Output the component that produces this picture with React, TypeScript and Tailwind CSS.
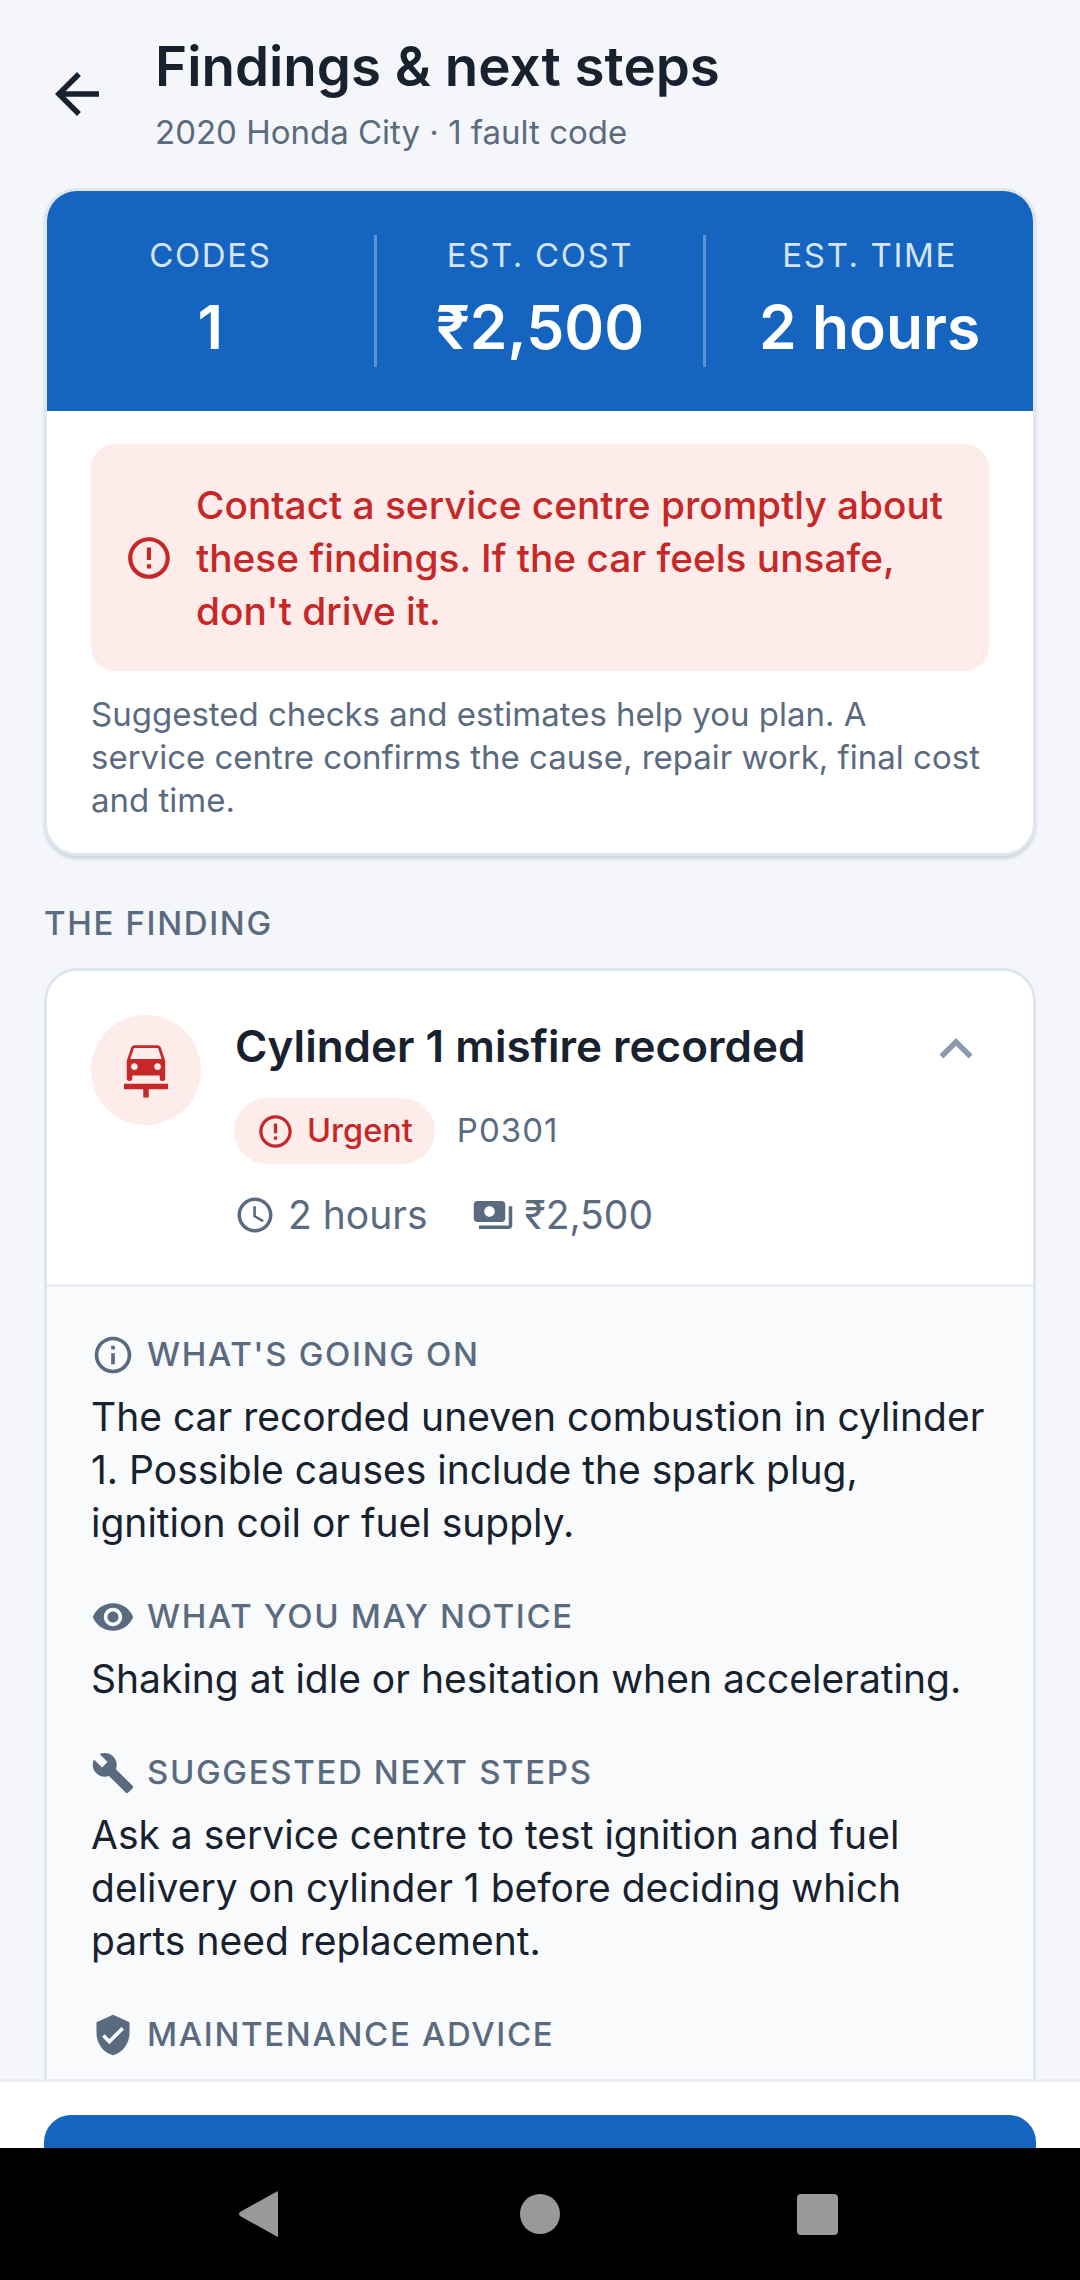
import { MdArrowBack, MdErrorOutline, MdCarRepair, MdKeyboardArrowUp, MdAccessTime, MdPayments, MdInfoOutline, MdVisibility, MdBuild, MdVerifiedUser } from 'react-icons/md'
import type { ReactNode } from 'react'

const stats = [
  { label: 'CODES', value: '1' },
  { label: 'EST. COST', value: '₹2,500' },
  { label: 'EST. TIME', value: '2 hours' },
]

function Section({ icon, title, children }: { icon: ReactNode; title: string; children?: ReactNode }) {
  return (
    <div className="mb-[48px]">
      <div className="flex items-center gap-[12px] h-[40px] text-[#5b6b7f]">
        {icon}
        <span className="text-[33px] font-medium tracking-[1.65px]">{title}</span>
      </div>
      {children && <p className="mt-[15px] text-[39px] leading-[53px] text-[#18212e]">{children}</p>}
    </div>
  )
}

export default function App() {
  return (
    <div className="w-[1080px] h-[2280px] flex flex-col overflow-hidden bg-[#f4f6fa] font-['Inter',sans-serif]">
      <div className="flex-1 min-h-0 overflow-hidden">
        {/* Header */}
        <div className="flex items-center h-[188px] pl-[44px]">
          <MdArrowBack className="text-[#18212e] text-[66px] mr-[45px]" />
          <div>
            <h1 className="text-[54.7px] leading-[66px] font-semibold text-[#18212e]">Findings &amp; next steps</h1>
            <p className="text-[33px] leading-[46px] mt-[10px] text-[#5b6b7f]">2020 Honda City · 1 fault code</p>
          </div>
        </div>

        {/* Summary card */}
        <div className="mx-[44px] rounded-[33px] border-[3px] border-[#e0e6ee] bg-white overflow-hidden shadow-[0_3px_3px_rgba(100,116,139,0.25)]">
          <div className="flex items-center h-[220px] bg-[#1565c0]">
            {stats.map((s, i) => (
              <div key={s.label} className={`flex-1 h-[132px] flex flex-col items-center ${i > 0 ? 'border-l-[3px] border-white/30' : ''}`}>
                <span className="text-[33px] leading-[38px] mt-[1px] tracking-[1.65px] text-[#d6e4f7]">{s.label}</span>
                <span className="text-[60.5px] leading-[76px] mt-[15px] font-semibold text-white">{s.value}</span>
              </div>
            ))}
          </div>
          <div className="px-[44px] pt-[33px] pb-[31px]">
            <div className="flex items-center gap-[22px] rounded-[24px] bg-[#fdecea] px-[33px] py-[34px]">
              <MdErrorOutline className="shrink-0 text-[50px] text-[#c62828]" />
              <p className="text-[38.8px] leading-[53px] font-medium text-[#c62828]">
                Contact a service centre promptly about these findings. If the car feels unsafe, don't drive it.
              </p>
            </div>
            <p className="mt-[22px] text-[33px] leading-[43px] text-[#5b6b7f]">
              Suggested checks and estimates help you plan. A service centre confirms the cause, repair work, final cost and time.
            </p>
          </div>
        </div>

        <div className="mx-[44px] mt-[47px] mb-[25px] text-[33px] leading-[40px] font-medium tracking-[1.65px] text-[#5b6b7f]">THE FINDING</div>

        {/* Finding card */}
        <div className="mx-[44px] rounded-[33px] border-[3px] border-[#e0e6ee] bg-white overflow-hidden">
          <div className="flex px-[44px] pt-[44px] pb-[44px] border-b-[3px] border-[#e8ecf2]">
            <div className="w-[110px] h-[110px] rounded-full bg-[#fdecea] flex items-center justify-center shrink-0">
              <MdCarRepair className="text-[66px] text-[#c62828]" />
            </div>
            <div className="ml-[33px] flex-1">
              <div className="flex items-center justify-between h-[60px] mt-[1px]">
                <h2 className="ml-[1px] text-[44px] leading-[60px] font-semibold text-[#18212e]">Cylinder 1 misfire recorded</h2>
                <MdKeyboardArrowUp className="shrink-0 text-[66px] text-[#8a9bb0] mt-[6px]" />
              </div>
              <div className="flex items-center gap-[22px] mt-[22px]">
                <span className="flex items-center gap-[12px] h-[66px] px-[22px] rounded-full bg-[#fdecea] text-[#c62828] text-[32.5px] font-medium">
                  <MdErrorOutline className="text-[39px]" />
                  Urgent
                </span>
                <span className="text-[33px] tracking-[1px] text-[#5b6b7f]">P0301</span>
              </div>
              <div className="flex items-center mt-[26px] text-[39px] leading-[50px] text-[#5b6b7f]">
                <MdAccessTime className="text-[42px] mr-[12px]" />
                <span>2 hours</span>
                <MdPayments className="text-[42px] ml-[44px] mr-[11px]" />
                <span>₹2,500</span>
              </div>
            </div>
          </div>
          <div className="bg-[#f8fafc] px-[44px] pt-[48px] pb-[200px]">
            <Section icon={<MdInfoOutline className="text-[44px]" />} title="WHAT'S GOING ON">
              The car recorded uneven combustion in cylinder 1. Possible causes include the spark plug, ignition coil or fuel supply.
            </Section>
            <Section icon={<MdVisibility className="text-[44px]" />} title="WHAT YOU MAY NOTICE">
              Shaking at idle or hesitation when accelerating.
            </Section>
            <Section icon={<MdBuild className="text-[44px]" />} title="SUGGESTED NEXT STEPS">
              Ask a service centre to test ignition and fuel delivery on cylinder 1 before deciding which parts need replacement.
            </Section>
            <Section icon={<MdVerifiedUser className="text-[44px]" />} title="MAINTENANCE ADVICE" />
          </div>
        </div>
      </div>

      {/* Footer, cut by the nav bar */}
      <div className="h-[69px] shrink-0 bg-white border-t-[3px] border-[#e8ecf2] px-[44px] pt-[33px] overflow-hidden">
        <div className="h-[100px] rounded-[27px] bg-[#1565c0]" />
      </div>

      {/* Android nav bar */}
      <div className="h-[132px] shrink-0 bg-black flex items-center">
        <svg className="w-full h-[60px]" viewBox="0 0 1080 60" fill="#999">
          <path d="M278 9 L278 52 Q278 54 276 52 L240 32 Q238 30 240 28 L276 8 Q278 6 278 9Z" />
          <circle cx="540" cy="30" r="20" />
          <rect x="797" y="10" width="41" height="41" rx="4" />
        </svg>
      </div>
    </div>
  )
}
